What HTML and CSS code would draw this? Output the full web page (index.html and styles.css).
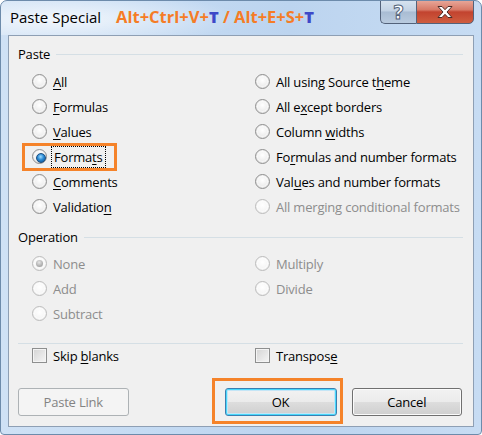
FILE: index.html
```html
<!DOCTYPE html>
<html>
<head>
<meta charset="utf-8">
<link rel="stylesheet" href="styles.css">
</head>
<body>
<div class="window">
  <div class="titlebar">
    <span class="title">Paste Special</span>
    <span class="shortcut">Alt+Ctrl+V+<b class="blue">T</b> / Alt+E+S+<b class="blue">T</b></span>
    <div class="caption">
      <div class="cbtn help"><span>?</span></div>
      <div class="cbtn close">
        <svg width="24" height="14" viewBox="0 0 24 14"><path d="M5 1.5h4l3 3.2 3-3.2h4l-5 5.5 5 5.5h-4l-3-3.2-3 3.2h-4l5-5.5z" fill="#fff" stroke="#4a2a26" stroke-width="1"/></svg>
      </div>
    </div>
  </div>
  <div class="client">
    <div class="group-head"><span>Paste</span><i class="rule"></i></div>
    <div class="grid paste-grid">
      <div class="opt"><i class="radio"></i><span><u>A</u>ll</span></div>
      <div class="opt"><i class="radio"></i><span>All using Source t<u>h</u>eme</span></div>
      <div class="opt"><i class="radio"></i><span><u>F</u>ormulas</span></div>
      <div class="opt"><i class="radio"></i><span>All e<u>x</u>cept borders</span></div>
      <div class="opt"><i class="radio"></i><span><u>V</u>alues</span></div>
      <div class="opt"><i class="radio"></i><span>Column <u>w</u>idths</span></div>
      <div class="opt"><span class="hl"><i class="radio on"></i><span class="focus">Forma<u>t</u>s</span></span></div>
      <div class="opt"><i class="radio"></i><span>Fo<u>r</u>mulas and number formats</span></div>
      <div class="opt"><i class="radio"></i><span><u>C</u>omments</span></div>
      <div class="opt"><i class="radio"></i><span>Val<u>u</u>es and number formats</span></div>
      <div class="opt"><i class="radio"></i><span>Validatio<u>n</u></span></div>
      <div class="opt dis"><i class="radio"></i><span>All merging conditional formats</span></div>
    </div>
    <div class="group-head op-head"><span>Operation</span><i class="rule"></i></div>
    <div class="grid op-grid">
      <div class="opt dis"><i class="radio on-dis"></i><span>None</span></div>
      <div class="opt dis"><i class="radio"></i><span>Multiply</span></div>
      <div class="opt dis"><i class="radio"></i><span>Add</span></div>
      <div class="opt dis"><i class="radio"></i><span>Divide</span></div>
      <div class="opt dis"><i class="radio"></i><span>Subtract</span></div>
    </div>
    <div class="sep"></div>
    <div class="grid checks">
      <div class="opt"><i class="check"></i><span>Skip <u>b</u>lanks</span></div>
      <div class="opt"><i class="check"></i><span>Transpos<u>e</u></span></div>
    </div>
    <div class="buttons">
      <div class="btn disabled">Paste Link</div>
      <div class="ok-wrap"><div class="btn default">OK</div></div>
      <div class="btn">Cancel</div>
    </div>
  </div>
</div>
</body>
</html>
```
FILE: styles.css
```css
* { box-sizing: border-box; }
html, body { margin: 0; padding: 0; }
body {
  width: 482px; height: 435px; overflow: hidden;
  font-family: "Open Sans", "Noto Sans", sans-serif;
  font-size: 13px; letter-spacing: -0.2px; color: #000;
  background: #fff;
}
.window {
  width: 482px; height: 435px;
  border: 1px solid #6d8bab;
  border-radius: 7px 7px 4px 4px;
  background: linear-gradient(90deg, #cfe1f5 0%, #c5dbf3 30%, #bcd4ef 60%, #c7dcf3 100%);
  display: flex; flex-direction: column;
  overflow: hidden;
}
.titlebar {
  height: 34px; flex: none;
  display: flex; align-items: flex-start;
  position: relative;
  background: radial-gradient(ellipse 180px 28px at 60px 18px, rgba(255,255,255,0.75), rgba(255,255,255,0) 100%);
}
.title {
  margin: 6px 0 0 9px;
  font-size: 15px; letter-spacing: 0; line-height: 20px; color: #000;
}
.shortcut {
  margin: 4px 0 0 15px;
  font-size: 16.5px; letter-spacing: 0; line-height: 24px; font-weight: bold; color: #f57c26;
  white-space: nowrap;
}
.shortcut .blue { color: #3d48c8; }
.caption { margin-left: auto; margin-right: 7px; display: flex; }
.cbtn {
  height: 24px; margin-top: -1px;
  border: 1px solid #53627a;
  display: flex; align-items: center; justify-content: center;
}
.help {
  width: 36px; border-right: none;
  border-radius: 0 0 0 5px;
  background: linear-gradient(#d6e2ef 0%, #c2d2e4 45%, #a9bcd3 50%, #b9cbdf 100%);
}
.help span {
  font: bold 19px/1 "DejaVu Sans", sans-serif; color: #fff;
  -webkit-text-stroke: 1px #55647a;
}
.close {
  width: 58px;
  border-radius: 0 0 5px 0;
  background: linear-gradient(#e7a597 0%, #d77966 40%, #c2432f 50%, #cf5d3f 100%);
}
.client {
  flex: 1;
  margin: 0 7px 7px 7px;
  border: 1px solid #8e9fb4;
  background: #f0f0f0;
  padding: 8px 10px 10px 9px;
  display: flex; flex-direction: column;
}
.group-head {
  display: flex; align-items: center; height: 20px;
}
.group-head span { line-height: 20px; }
.group-head .rule {
  flex: 1; height: 1px; background: #d5dfe5; margin-left: 6px;
}
.grid {
  display: grid; grid-template-columns: 223px 1fr;
  padding-left: 14px;
}
.paste-grid { margin-top: 5px; }
.opt {
  height: 25px; display: flex; align-items: center;
  white-space: nowrap;
}
.opt > span, .hl > span { line-height: 18px; }
.hl { display: flex; align-items: center; position: relative; }
.hl::after {
  content: ""; position: absolute;
  left: -10px; right: -13px; top: -5px; bottom: -5px;
  border: 3px solid #f5832a;
}
.focus { outline: 1px dotted #000; outline-offset: 1px; padding: 0 1px; }
.radio {
  width: 15px; height: 15px; flex: none;
  border-radius: 50%;
  border: 1px solid #8f8f8f;
  background: radial-gradient(circle at 50% 40%, #ffffff 0%, #f1f1f1 45%, #d9d9d9 100%);
  margin-right: 6px;
  position: relative;
}
.radio::before {
  content: ""; position: absolute; inset: 1px; border-radius: 50%;
  border: 1px solid #fff; opacity: .6;
}
.radio.on::after {
  content: ""; position: absolute; left: 2.5px; top: 2.5px; width: 8px; height: 8px; border-radius: 50%;
  background: radial-gradient(circle at 45% 35%, #9fdcff 0%, #2a8ad4 45%, #0c4d8c 100%);
  border: 1px solid #1b4e80;
}
.dis { color: #8d8d8d; }
.dis .radio {
  border-color: #bcbcbc;
  background: radial-gradient(circle at 50% 40%, #fff 0%, #f5f5f5 60%, #e6e6e6 100%);
}
.radio.on-dis::after {
  content: ""; position: absolute; left: 3px; top: 3px; width: 7px; height: 7px; border-radius: 50%;
  background: radial-gradient(circle at 45% 35%, #e6e6e6 0%, #b0b0b0 60%, #939393 100%);
}
.op-head { margin-top: 8px; }
.op-grid { margin-top: 4px; }
.sep { height: 1px; background: #d5dfe5; margin-top: 17px; }
.checks { margin-top: 0; }
.checks .opt { height: 23px; }
.check {
  width: 15px; height: 15px; flex: none;
  border: 1px solid #8e8f8f;
  background: linear-gradient(135deg, #d4d4d4, #f5f5f5);
  box-shadow: inset 0 0 0 1px #f4f4f4;
  margin-right: 6px;
}
.buttons {
  margin-top: auto;
  display: flex; justify-content: space-between;
  padding-right: 1px;
}
.btn {
  width: 112px; height: 28px;
  border: 1px solid #707070; border-radius: 3px;
  background: linear-gradient(#f2f2f2 0%, #ebebeb 50%, #dddddd 51%, #cfcfcf 100%);
  box-shadow: inset 0 0 0 1px #fbfbfb;
  display: flex; align-items: center; justify-content: center;
  line-height: 18px;
}
.btn.disabled {
  border-color: #adb2b5; background: #f4f4f4; color: #838383;
  box-shadow: none;
}
.btn.default {
  border-color: #3c7fb1;
  box-shadow: inset 0 0 0 1px #48d8fb, inset 0 0 0 2px #c4e5f6;
}
.ok-wrap { position: relative; margin-left: 96px; margin-right: 15px; }
.ok-wrap::after {
  content: ""; position: absolute;
  left: -13px; right: -6px; top: -10px; bottom: -8px;
  border: 3px solid #f5832a;
}
u { text-decoration-thickness: 1px; text-underline-offset: 2px; }
```
